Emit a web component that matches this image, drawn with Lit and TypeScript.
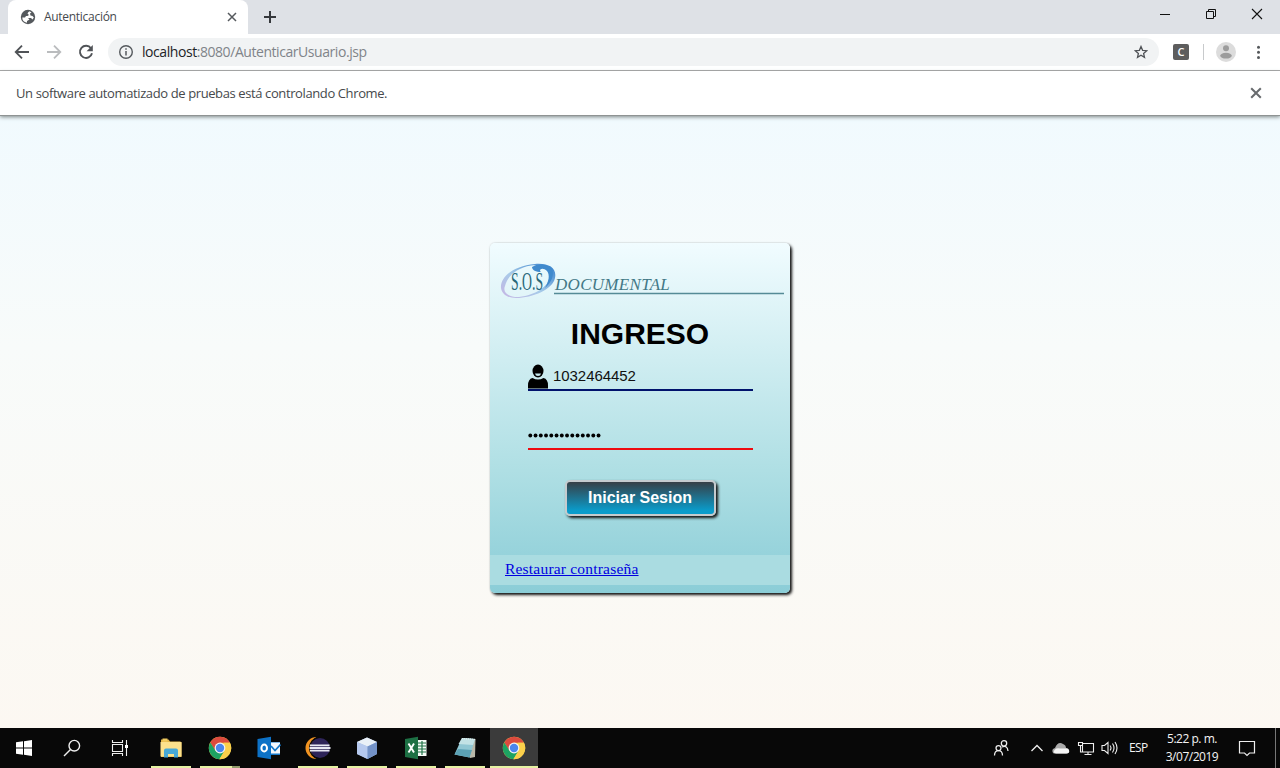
import { LitElement, html, css, svg } from "lit";
import { customElement } from "lit/decorators.js";

const chromeLogo = html`<svg width="24" height="24" viewBox="-12 -12 24 24">
  <circle r="11.2" fill="#f7d04e" />
  <path d="M-9.7 -5.6A11.2 11.2 0 0 1 9.9 -5.2H0L-5 2.6Z" fill="#dc4b3e" />
  <path d="M-9.7 -5.6A11.2 11.2 0 0 0 -.6 11.2L4.6 2.7L-4.4 2.7Z" fill="#1da362" />
  <path d="M9.9 -5.2A11.2 11.2 0 0 1 -.6 11.2L4.6 2.7L4 -5.2Z" fill="#fbd04b" />
  <circle r="5.4" fill="#f4f4f4" /><circle r="4.2" fill="#4a86ee" />
</svg>`;

const apps = [
  { line: "on", icon: html`<svg width="24" height="24" viewBox="0 0 24 24"><path d="M2 3.500h7.500l1.500 2h10q1.500 0 1.500 1.500v14H2Z" fill="#e5b84b"/><path d="M3.500 2.500h5v3h-5Z" fill="#f0cb60"/><path d="M1.500 6h21v14.500h-21Z" fill="#fce18c"/><path d="M5 21.500v-7q0-2 2-2h10q2 0 2 2v7h-4v-3.500h-6v3.500Z" fill="#48a9d6"/></svg>` },
  { line: "split", icon: chromeLogo },
  { line: "", icon: html`<svg width="24" height="24" viewBox="0 0 24 24"><path d="M13 6h10v13H13Z" fill="#1477c9"/><path d="M14 6.500h9v11h-9Z" fill="#f4f8fd"/><path d="M14 10l4 4.500 5.500-6" fill="none" stroke="#1477c9" stroke-width="1.700"/><path d="M.500 3L14 .8v22.500L.500 21Z" fill="#0d72c7"/><ellipse cx="7.200" cy="12" rx="2.800" ry="3.500" fill="none" stroke="#fff" stroke-width="2"/></svg>` },
  { line: "on", icon: html`<svg width="26" height="24" viewBox="0 0 26 24"><path d="M11.500 1A11 11 0 0 0 11.500 23A13.500 13.500 0 0 1 11.500 1Z" fill="#f29421"/><circle cx="15" cy="12" r="10" fill="#2e2459"/><path d="M11.500 1.200A11 11 0 0 0 11.500 22.800" fill="none" stroke="#080808" stroke-width="1.200" transform="translate(2 0)"/><path d="M5 9.300h19.500M4.500 12h21M5 14.700h19.500" stroke="#e9e9f4" stroke-width="1.800"/></svg>` },
  { line: "on", icon: html`<svg width="24" height="24" viewBox="0 0 24 24"><path d="M12 1.500L22 6v12L12.500 23L2 18V6Z" fill="#a7bfe3"/><path d="M12 1.500L22 6l-9.500 4.500L2 6Z" fill="#e9f0f7"/><path d="M2 6l10.500 4.500V23L2 18Z" fill="#b6c9ee"/><path d="M22 6l-9.500 4.500V23L22 18Z" fill="#7392c7"/></svg>` },
  { line: "on", icon: html`<svg width="24" height="24" viewBox="0 0 24 24"><path d="M13 4h9.500v16H13Z" fill="#f5fbf7"/><path d="M14 7h8M14 10h8M14 13h8M14 16h8M18 5v14" stroke="#217346" stroke-width="1.200"/><path d="M1 3L14 .8v22.500L1 21Z" fill="#1d7044"/><path d="M4.500 7.500l5.500 9M10 7.500l-5.500 9" stroke="#fff" stroke-width="1.900"/></svg>` },
  { line: "on", icon: html`<svg width="26" height="24" viewBox="0 0 26 24"><path d="M10 2l13.500 1-.5 18-5 1Z" fill="#b9b8a9"/><path d="M10 2l13 1-5.500 18.500L2.500 18.500Z" fill="#91c7d3"/><path d="M10 2l13 1-2 6-14.500-1Z" fill="#c3e2e5"/><path d="M6 13l14 1-2.500 7.500L2.500 18.500Z" fill="#5ca2b5"/><path d="M10 2.500l13 1" stroke="#e3eeee" stroke-width="1.200" stroke-dasharray="1 1"/></svg>` },
  { line: "active", icon: chromeLogo },
];

@customElement("browser-chrome")
class BrowserChrome extends LitElement {
  static styles = css`
    :host { display: block; font-family: "Open Sans", "Noto Sans", sans-serif; position: relative; z-index: 1; }
    svg { display: block; flex: none; }
    .strip { height: 34px; background: #dee1e6; display: flex; align-items: center; padding-left: 8px; }
    .tab { width: 240px; height: 34px; box-sizing: border-box; background: #fff; border-radius: 8px 8px 0 0; display: flex; align-items: center; padding: 0 11px 0 12px; color: #45494d; font-size: 12px; }
    .tab span { margin-left: 8px; flex: 1; letter-spacing: -0.29px; padding-bottom: 1px; }
    .plus { margin-left: 15px; }
    .window { margin-left: auto; display: flex; gap: 30px; padding-right: 14px; padding-bottom: 6px; }
    .bar { height: 36px; background: #fff; display: flex; align-items: center; border-bottom: 1px solid #a8a8a8; }
    .nav { display: flex; gap: 16px; padding-left: 14px; width: 94px; box-sizing: border-box; }
    .address { margin-left: 14px; height: 28px; width: 1051px; border-radius: 14px; background: #f1f3f4; display: flex; align-items: center; padding: 0 11px 0 10px; box-sizing: border-box; color: #808489; font-size: 14px; }
    .address span { margin-left: 8px; flex: 1; letter-spacing: -0.44px; padding-bottom: 1px; }
    .address b { color: #222427; font-weight: 400; }
    .ext { width: 16px; height: 16px; border-radius: 2px; background: #5d5d5d; color: #fff; font: 600 11px/16px "Open Sans", sans-serif; text-align: center; margin-left: 14px; }
    .rule { width: 1px; height: 16px; background: #c8cacc; margin: 0 12px 0 14px; }
    .info { height: 44px; background: #fff; display: flex; align-items: center; justify-content: space-between; padding: 0 18px 0 16px; color: #46494c; font-size: 13px; box-shadow: 0 1px 0 #8f9393, 0 2px 4px #7c8585; }
    .info span { letter-spacing: -0.39px; }
    .dots { margin-left: 15px; }
  `;
  render() {
    const cross = (w: string, s: number, c: string) => html`<svg width=${s} height=${s} viewBox="0 0 10 10"><path d="M1 1l8 8M9 1l-8 8" stroke=${c} stroke-width=${w}/></svg>`;
    return html`
      <div class="strip">
        <div class="tab">
          <svg width="16" height="16" viewBox="0 0 16 16"><circle cx="8" cy="8" r="7.200" fill="#55595d"/><path d="M9.500 2.300Q8 3 7.500 4.500L9 6 7.500 7H6l-1 1.500H2.300Q2.200 12.800 7 13.700V12L9.500 10.500 8 9h3l1.500 1.500 1.300-2L12.500 7l-2-.5L10 4.500l1.500-1Z" fill="#fff"/></svg>
          <span>Autenticación</span>${cross("1.500", 10, "#55595d")}
        </div>
        <svg class="plus" width="14" height="14" viewBox="0 0 14 14"><path d="M7 1v12M1 7h12" stroke="#35383c" stroke-width="2"/></svg>
        <div class="window">
          <svg width="12" height="12" viewBox="0 0 12 12"><path d="M0 6.500h10" stroke="#111"/></svg>
          <svg width="16" height="12" viewBox="0 0 16 12"><path d="M4.500 3.500h7v7h-7ZM6.500 3.500v-2h7v7h-2" fill="none" stroke="#111"/></svg>
          <svg width="18" height="12" viewBox="0 0 18 12"><path d="M4 1l10 10M14 1L4 11" stroke="#111" stroke-width="1.100"/></svg>
        </div>
      </div>
      <div class="bar">
        <div class="nav">
          <svg width="16" height="16" viewBox="0 0 16 16"><path d="M15 8H2M8 1.700L1.700 8 8 14.300" fill="none" stroke="#505357" stroke-width="1.800"/></svg>
          <svg width="16" height="16" viewBox="0 0 16 16"><path d="M1 8h13M8 1.700L14.300 8 8 14.300" fill="none" stroke="#babcbe" stroke-width="1.800"/></svg>
          <svg width="16" height="16" viewBox="0 0 16 16"><path d="M13 4.200A6.100 6.100 0 1 0 14 9.300" fill="none" stroke="#505357" stroke-width="1.900"/><path d="M14.800 1v6.200H8.600Z" fill="#505357"/></svg>
        </div>
        <div class="address">
          <svg width="16" height="16" viewBox="0 0 16 16"><circle cx="8" cy="8" r="6.300" fill="none" stroke="#55595d" stroke-width="1.400"/><path d="M8 7v4.500M8 4.300v1.500" stroke="#55595d" stroke-width="1.500"/></svg>
          <span><b>localhost</b>:8080/AutenticarUsuario.jsp</span>
          <svg width="14" height="14" viewBox="0 0 14 14"><path d="M7 1.500l1.600 3.800 4.100.4-3.100 2.700.9 4L7 10.300l-3.500 2.100.9-4-3.100-2.700 4.100-.4Z" fill="none" stroke="#505357" stroke-width="1.300"/></svg>
        </div>
        <div class="ext">C</div><div class="rule"></div>
        <svg width="20" height="20" viewBox="0 0 20 20"><circle cx="10" cy="10" r="10" fill="#dcdcdc"/><circle cx="10" cy="6.200" r="3" fill="#9c9c9c"/><ellipse cx="10" cy="13.700" rx="5.800" ry="2.900" fill="#9c9c9c"/></svg>
        <svg class="dots" width="14" height="16" viewBox="0 0 14 16"><g fill="#55585b"><circle cx="7.500" cy="3.200" r="1.500"/><circle cx="7.500" cy="8.200" r="1.500"/><circle cx="7.500" cy="13.400" r="1.500"/></g></svg>
      </div>
      <div class="info"><span>Un software automatizado de pruebas está controlando Chrome.</span>${cross("1.700", 12, "#686b6e")}</div>`;
  }
}

@customElement("login-card")
class LoginCard extends LitElement {
  static styles = css`
    :host { display: block; width: 300px; height: 350px; border-radius: 5px; background: linear-gradient(#f1fcff, #afdfe4 65%, #8bcdd7); box-shadow: 2px 2px 3px #111, 0 0 2px #c5cdcf; overflow: hidden; }
    .card { display: flex; flex-direction: column; height: 100%; }
    .logo { display: block; margin-top: 16px; flex: none; }
    .docu { font: italic 17px "Liberation Serif", serif; fill: #427886; letter-spacing: 0.3px; }
    .sos { font: 25px "Liberation Serif", serif; fill: #286779; }
    h1 { margin: 15px 0 0; font: 700 30px/36px "Liberation Sans", sans-serif; text-align: center; color: #000; }
    .field { width: 225px; margin-left: 38px; box-sizing: border-box; display: flex; align-items: center; font: 15px "Liberation Sans", sans-serif; color: #111; }
    .user { height: 28px; margin-top: 11px; border-bottom: 2px solid #00126c; gap: 5px; align-items: flex-end; }
    .user span { line-height: 17px; padding-bottom: 5px; letter-spacing: -0.06px; }
    .user svg { display: block; }
    .pass { height: 27px; margin-top: 32px; border-bottom: 2px solid #ee0b10; }
    .button { width: 151px; height: 36px; margin: 30px 0 0 75px; box-sizing: border-box; border: 2px solid #c5cbce; border-radius: 5px; background: linear-gradient(#373f46, #0a9ccb 90%); box-shadow: 2px 2px 3px #111; color: #fff; font: 700 16px "Liberation Sans", sans-serif; padding: 0 1px 0 0; }
    .foot { margin-top: auto; margin-bottom: 8px; height: 30px; background: #aadce1; box-sizing: border-box; padding: 4px 15px; font: 15.500px/20px "Liberation Serif", serif; }
    a { color: #0000e0; text-decoration: underline; letter-spacing: 0.2px; }
  `;
  render() {
    return html`<div class="card">
      <svg class="logo" width="300" height="42" viewBox="0 0 300 42">
        <defs><linearGradient id="ring" x1="0" y1="1" x2="1" y2="0"><stop offset="0" stop-color="#c8b5e4"/><stop offset=".45" stop-color="#a8cbe9"/><stop offset="1" stop-color="#307dcb"/></linearGradient></defs>
        <path fill="url(#ring)" fill-rule="evenodd" d="M11 29C10 18 23 7 45 5C59 4 67 9 65 19C63 30 43 39 26 39C17 39 12 35 11 29ZM15 27C12 34 20 38.500 29 38C46 36 59 27 59.500 18C60 9 52 5 41 6.500C26 9 17 18 15 27Z"/>
        <path d="M42 8C48 4 58 5 62 10C65 16 61 24 55 29C59 22 60 16 57 12C54 9 50 9 50 12L51 13C46 13 42 11 42 8Z" fill="#408acd"/>
        <g transform="translate(21 31) scale(.55 1)"><text class="sos">S.O.S</text></g>
        <text class="docu" x="65" y="31">DOCUMENTAL</text>
        <path d="M64 34.500h230" stroke="#558b96" stroke-width="1.300"/>
      </svg>
      <h1>INGRESO</h1>
      <div class="field user">
        <svg width="20" height="25" viewBox="0 0 20 25"><ellipse cx="10" cy="7" rx="5.500" ry="6.500"/><path d="M0 24.500v-3q0-6.500 4.500-7.500 5.500 3 11 0 4.500 1 4.500 7.500v3Z"/><path d="M7 9.500h6q-.5 2.500-3 2.500t-3-2.500Z" fill="#c5e7ed"/></svg>
        <span>1032464452</span>
      </div>
      <div class="field pass"><svg width="76" height="5" viewBox="0 0 76 5">${Array.from({ length: 14 }, (_, i) => svg`<circle cx=${2.3 + i * 5.25} cy="2.500" r="1.950"/>`)}</svg></div>
      <button class="button">Iniciar Sesion</button>
      <div class="foot"><a>Restaurar contraseña</a></div>
    </div>`;
  }
}

@customElement("task-bar")
class TaskBar extends LitElement {
  static styles = css`
    :host { display: flex; height: 40px; background: #080808; color: #f4f4f4; font-family: "Open Sans", "Noto Sans", sans-serif; }
    svg { display: block; }
    .cell { width: 48px; display: grid; place-items: center; }
    .apps { display: flex; gap: 1px; margin-left: 3px; }
    .app { width: 48px; height: 40px; box-sizing: border-box; display: grid; place-items: center; background: linear-gradient(#e5f2a3, #e5f2a3) no-repeat 50% 100% / 0 2px; }
    .on { background-size: 40px 2px; }
    .split { background-image: linear-gradient(90deg, #e5f2a3 80%, #929b6c 80%); background-size: 40px 2px; }
    .active { background-color: #3b3b3b; background-size: 48px 2px; }
    .tray { display: flex; align-items: center; margin-left: auto; font-size: 12px; }
    .lang { margin-left: 10px; width: 21px; font-size: 12px; letter-spacing: -0.6px; padding-bottom: 1px; }
    .clock { width: 64px; margin-left: 10px; text-align: center; line-height: 18px; letter-spacing: -0.48px; }
    .people { margin-right: 19px; }
    .note { margin-left: 14px; }
    .edge { width: 1px; height: 40px; background: #777; margin: 0 4px 0 19px; }
  `;
  render() {
    return html`
      <div class="cell"><svg width="16" height="16" viewBox="0 0 16 16"><path d="M0 2.300L7 1.300V7.500H0ZM8 1.200L16 0v7.500H8ZM0 8.500h7v6.200l-7-1ZM8 8.500h8V16l-8-1.200Z" fill="#fff"/></svg></div>
      <div class="cell"><svg width="18" height="18" viewBox="0 0 18 18"><circle cx="11.300" cy="6.700" r="5.300" fill="none" stroke="#eee" stroke-width="1.400"/><path d="M7.500 10.500L1 17" stroke="#eee" stroke-width="1.400"/></svg></div>
      <div class="cell"><svg width="18" height="18" viewBox="0 0 18 18"><path d="M1.500 1v2.500h10V1M1.500 17v-2.500h10V17M1.500 5.500h10v7h-10ZM15.500 1v16" fill="none" stroke="#eee" stroke-width="1.100"/><path d="M14 6h3v3h-3Z" fill="#fff"/></svg></div>
      <div class="apps">${apps.map((a) => html`<div class="app ${a.line}">${a.icon}</div>`)}</div>
      <div class="tray">
        <svg class="people" width="18" height="18" viewBox="0 0 18 18"><g fill="none" stroke="#eee" stroke-width="1.250"><circle cx="6.500" cy="9" r="2.500"/><path d="M2.500 16.500q0-5 4-5t4 5"/><circle cx="12" cy="4.300" r="2.700"/><path d="M10 8q5.500-2 6 4"/></g></svg>
        <svg width="16" height="16" viewBox="0 0 16 16"><path d="M2.500 11L8 5.500l5.500 5.500" fill="none" stroke="#eee" stroke-width="1.300"/></svg>
        <svg width="32" height="16" viewBox="-8 0 32 16"><path d="M0 13q-2-4 2-5Q5 1 10 4q3 1 3 4 3 0 3 3t-3 2.500H1Z" fill="#aaa"/><path d="M3 13.500q-4-1-1-4 2-2 5-1l7 0q3 1 2 4-1 1-3 1Z" fill="#f5f5f5"/></svg>
        <svg width="18" height="16" viewBox="0 0 18 16"><path d="M5.500 3.500h11v8.500H5.500V6M11 12v2.500M7.500 14.500h7M1.500 2.500h4v3h-4ZM3.500 5.500v6.500h2" fill="none" stroke="#eee" stroke-width="1.100"/></svg>
        <svg width="24" height="16" viewBox="-6 0 24 16"><path d="M1 5.500h2.500L7 2.500v11L3.500 10.500H1ZM9 5.500q2 2.500 0 5M11.500 3.500q3 4.500 0 9M14 2q4 6 0 12" fill="none" stroke="#eee" stroke-width="1.100"/></svg>
        <div class="lang">ESP</div>
        <div class="clock">5:22 p. m.<br />3/07/2019</div>
        <svg class="note" width="18" height="18" viewBox="0 0 18 18"><path d="M1.500 2.500h15v11.500h-5L9 16.500 6.500 14h-5Z" fill="none" stroke="#eee" stroke-width="1.200"/></svg>
        <div class="edge"></div>
      </div>`;
  }
}

@customElement("app-root")
class AppRoot extends LitElement {
  static styles = css`
    :host { display: flex; flex-direction: column; width: 1280px; height: 768px; overflow: hidden; }
    .page { flex: 1; display: flex; justify-content: center; align-items: flex-start; padding-top: 128px; background: linear-gradient(#f1fafe, #f8fbfa 38%, #fcf8f2); box-sizing: border-box; }
  `;
  render() {
    return html`<browser-chrome></browser-chrome>
      <main class="page"><login-card></login-card></main>
      <task-bar></task-bar>`;
  }
}
